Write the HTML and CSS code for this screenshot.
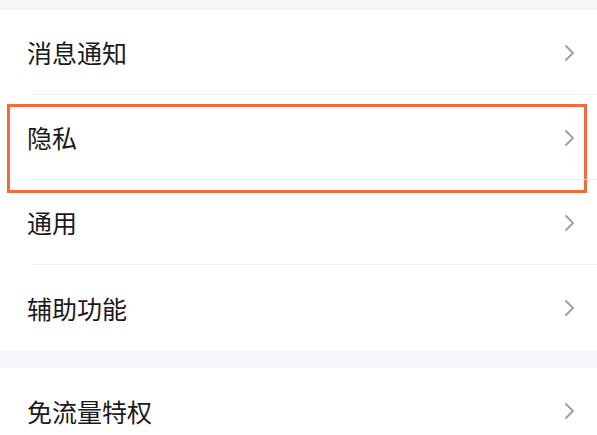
FILE: index.html
```html
<!DOCTYPE html>
<html lang="zh">
<head>
<meta charset="utf-8">
<link rel="stylesheet" href="styles.css">
</head>
<body>
<div class="page">
  <div class="gap gap-top"></div>
  <div class="group">
    <div class="row"><span class="label">消息通知</span><svg class="chev" viewBox="0 0 12 18"><path d="M2 2 L9 9 L2 16"/></svg></div>
    <div class="row"><span class="label">隐私</span><svg class="chev" viewBox="0 0 12 18"><path d="M2 2 L9 9 L2 16"/></svg><div class="highlight"></div></div>
    <div class="row"><span class="label">通用</span><svg class="chev" viewBox="0 0 12 18"><path d="M2 2 L9 9 L2 16"/></svg></div>
    <div class="row last"><span class="label">辅助功能</span><svg class="chev" viewBox="0 0 12 18"><path d="M2 2 L9 9 L2 16"/></svg></div>
  </div>
  <div class="gap gap-mid"></div>
  <div class="group">
    <div class="row last"><span class="label">免流量特权</span><svg class="chev" viewBox="0 0 12 18"><path d="M2 2 L9 9 L2 16"/></svg></div>
  </div>
</div>
</body>
</html>
```
FILE: styles.css
```css
html, body {
  margin: 0;
  padding: 0;
  background: #ffffff;
}
.page {
  width: 597px;
  height: 435px;
  overflow: hidden;
  font-family: "Noto Sans CJK SC", "Noto Sans", sans-serif;
}
.gap {
  background: #f5f6f9;
}
.gap-top {
  height: 10px;
}
.gap-mid {
  height: 17px;
}
.group {
  background: #ffffff;
}
.row {
  position: relative;
  height: 85px;
  display: flex;
  align-items: center;
  justify-content: space-between;
  padding: 0 21px 0 27px;
  box-sizing: border-box;
}
.row::after {
  content: "";
  position: absolute;
  left: 32px;
  right: 0;
  bottom: 0;
  height: 1px;
  background: #f1f1f1;
}
.row.last {
  height: 86px;
}
.row.last::after {
  display: none;
}
.label {
  font-size: 25px;
  color: #1a1a1a;
  line-height: 1;
}
.chev {
  width: 12px;
  height: 18px;
  fill: none;
  stroke: #a0a0a0;
  stroke-width: 1.9;
  stroke-linecap: round;
  stroke-linejoin: round;
}
.highlight {
  position: absolute;
  left: 7px;
  top: 9px;
  width: 580px;
  height: 89px;
  border: 3px solid #f46a3c;
  box-sizing: border-box;
  pointer-events: none;
}
```
